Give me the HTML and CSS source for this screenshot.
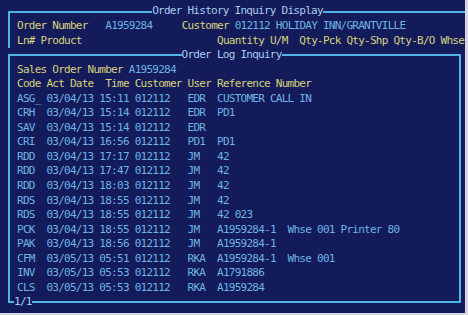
FILE: index.html
```html
<!DOCTYPE html>
<html>
<head>
<meta charset="UTF-8">
<title>Order Log Inquiry</title>
<link rel="stylesheet" href="styles.css">
</head>
<body>
	<div class="screen">
		<div class="win outer">
			<div class="head"><span class="title">Order History Inquiry Display</span></div>
			<div class="row"><span class="y">Order Number</span>   <span class="c">A1959284</span>     <span class="y">Customer</span> <span class="c">012112 HOLIDAY INN/GRANTVILLE</span></div>
			<div class="row y">Ln# Product                       Quantity U/M  Qty-Pck Qty-Shp Qty-B/O Whse</div>
		</div>
		<div class="win inner">
			<div class="head"><span class="title">Order Log Inquiry</span></div>
			<div class="row"><span class="y">Sales Order Number</span> <span class="c">A1959284</span></div>
			<div class="row y">Code Act Date  Time Customer User Reference Number</div>
			<div class="row c">ASG_ 03/04/13 15:11 012112   EDR  CUSTOMER CALL IN</div>
			<div class="row c">CRH  03/04/13 15:14 012112   EDR  PD1</div>
			<div class="row c">SAV  03/04/13 15:14 012112   EDR</div>
			<div class="row c">CRI  03/04/13 16:56 012112   PD1  PD1</div>
			<div class="row c">RDD  03/04/13 17:17 012112   JM   42</div>
			<div class="row c">RDD  03/04/13 17:47 012112   JM   42</div>
			<div class="row c">RDD  03/04/13 18:03 012112   JM   42</div>
			<div class="row c">RDS  03/04/13 18:55 012112   JM   42</div>
			<div class="row c">RDS  03/04/13 18:55 012112   JM   42 023</div>
			<div class="row c">PCK  03/04/13 18:55 012112   JM   A1959284-1  Whse 001 Printer 80</div>
			<div class="row c">PAK  03/04/13 18:56 012112   JM   A1959284-1</div>
			<div class="row c">CFM  03/05/13 05:51 012112   RKA  A1959284-1  Whse 001</div>
			<div class="row c">INV  03/05/13 05:53 012112   RKA  A1791886</div>
			<div class="row c">CLS  03/05/13 05:53 012112   RKA  A1959284</div>
		</div>
		<div class="foot"><span class="title">1/1</span></div>
	</div>
</body>
</html>
```
FILE: styles.css
```css
:root { --back: #131b5b; --line: #4fb3e3; --yel: #d8d27c; --cyan: #6fb4e2; --ttl: #a9cdef; --row: 14.56px; }
html, body { margin: 0; padding: 0; background: #d6d7df; }
.screen { width: 465px; height: 313px; overflow: hidden; background: var(--back); font-family: "DejaVu Sans Mono", monospace; font-size: 11px; letter-spacing: -0.74px; }
.win { margin-left: 8px; border-top: 2px solid var(--line); border-left: 2px solid var(--line); padding-left: 7px; box-sizing: border-box; }
.outer { margin-top: 10.5px; border-right: none; }
.outer .head { margin-top: -8.1px; padding-left: 135.2px; }
.inner { margin-top: 6.32px; width: 453px; border-right: 2px solid var(--line); border-bottom: 2px solid var(--line); padding-bottom: 5.7px; }
.inner .head { margin-top: -8.32px; padding-left: 164.6px; }
.head, .row, .foot { height: var(--row); line-height: var(--row); white-space: pre; }
.title { background: var(--back); color: var(--ttl); }
.foot { margin-top: -7.7px; padding-left: 14px; }
.y { color: var(--yel); }
.c { color: var(--cyan); }
```
